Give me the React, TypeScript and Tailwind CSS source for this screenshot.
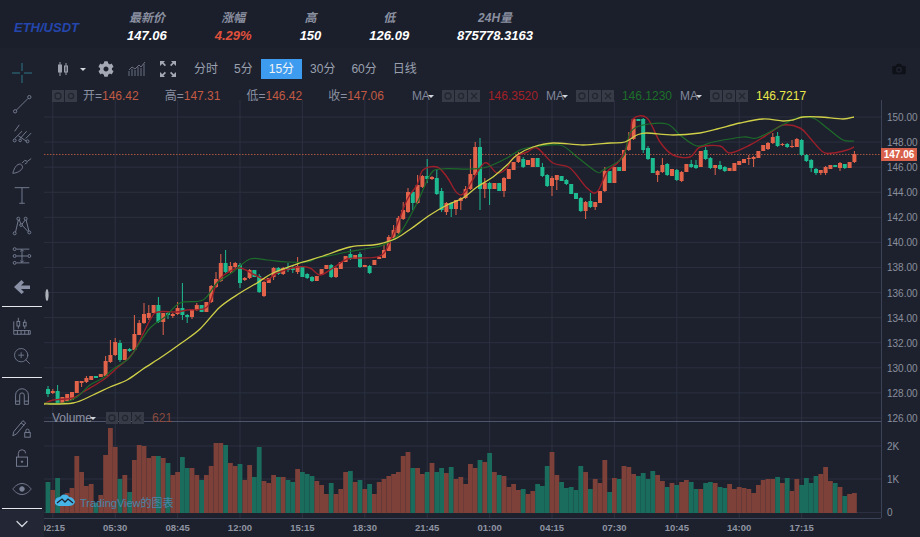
import { ZoomIn, ChevronDown, Camera } from "lucide-react";
import { FaCog } from "react-icons/fa";

type Candle = [number, number, number, number?, number?];
// [up 1 / down 0, body top, body bottom, wick top, wick bottom], page pixels
const CANDLES: Candle[] = [
  [0, 389, 394, 386, 397], [1, 391, 393, 389, 394], [0, 391, 403, 385, 404], [1, 397, 403], [1, 394, 401], [1, 392, 400], [1, 381, 393], [1, 381, 383, 381, 387],
  [1, 378, 382, 376, 383], [1, 376, 380], [0, 376, 378], [1, 374, 377], [1, 361, 376, 356, 376], [1, 355, 362, 340, 363], [1, 342, 355, 338, 356], [0, 343, 360, 340, 362],
  [1, 349, 360], [0, 349, 351, 348, 352], [1, 334, 350, 315, 350], [1, 323, 335, 320, 335], [1, 314, 323, 303, 324], [1, 313, 318, 305, 320], [1, 305, 313], [0, 305, 322, 297, 323],
  [1, 313, 322, 313, 335], [0, 313, 315, 312, 319], [1, 314, 316, 313, 318], [1, 308, 314, 302, 315], [0, 308, 315, 283, 320], [0, 315, 317, 314, 323], [1, 310, 317, 309, 319], [1, 305, 310, 303, 311],
  [0, 305, 312], [1, 302, 312], [1, 286, 302, 285, 303], [1, 279, 287, 272, 288], [1, 263, 281, 254, 282], [0, 263, 272, 250, 273], [1, 266, 272, 262, 273], [1, 263, 267, 262, 268],
  [0, 265, 283, 263, 288], [1, 278, 280, 277, 281], [1, 270, 278, 269, 279], [0, 270, 277], [0, 276, 292, 274, 293], [1, 282, 296, 281, 297], [1, 278, 283], [1, 268, 277, 267, 280],
  [0, 268, 274, 267, 275], [1, 268, 274, 267, 275], [0, 268, 270, 263, 272], [0, 268, 270, 266, 273], [1, 266, 272, 257, 274], [0, 267, 277], [0, 274, 278, 273, 279], [0, 277, 281, 276, 282],
  [1, 276, 281], [1, 269, 275], [1, 265, 269], [0, 265, 277, 264, 278], [1, 268, 277, 267, 278], [1, 262, 269], [1, 256, 262], [0, 254, 259, 249, 260],
  [1, 255, 259], [0, 254, 267, 252, 268], [1, 265, 267], [0, 266, 273, 265, 274], [1, 260, 265], [1, 257, 259], [1, 250, 258, 245, 258], [1, 237, 251, 235, 251],
  [1, 230, 238, 225, 239], [1, 218, 233, 216, 234], [1, 210, 219, 202, 220], [1, 192, 212, 188, 213], [0, 192, 203, 191, 210], [1, 185, 203, 175, 204], [1, 176, 187, 175, 188], [0, 176, 179, 159, 183],
  [1, 177, 179, 176, 180], [0, 178, 194, 169, 195], [0, 191, 210, 188, 212], [1, 203, 212, 202, 215], [0, 203, 209, 202, 217], [1, 200, 209, 200, 215], [1, 198, 201, 197, 210], [1, 189, 198, 186, 199],
  [1, 174, 189, 159, 190], [1, 147, 175, 142, 176], [0, 147, 189, 138, 210], [1, 183, 189, 178, 198], [0, 183, 189, 182, 205], [1, 183, 189], [0, 183, 191], [1, 178, 191, 177, 197],
  [1, 169, 179], [1, 162, 170], [1, 156, 162, 152, 163], [0, 159, 167, 157, 168], [1, 160, 165], [1, 158, 167], [0, 158, 167], [0, 167, 176, 163, 177],
  [0, 175, 186, 174, 187], [1, 178, 186, 176, 196], [1, 175, 180, 175, 190], [0, 176, 181], [0, 180, 184, 179, 185], [0, 184, 194], [0, 193, 199], [0, 198, 211, 197, 212],
  [1, 202, 211, 201, 219], [0, 201, 207, 193, 208], [1, 202, 207, 202, 210], [1, 191, 203], [1, 171, 191, 167, 192], [0, 171, 183], [1, 167, 183], [0, 167, 171],
  [1, 150, 171], [1, 140, 150, 132, 151], [1, 119, 139, 118, 140], [0, 119, 121], [0, 119, 150, 118, 153], [0, 148, 159, 146, 160], [0, 158, 173], [1, 171, 175, 170, 182],
  [1, 165, 172, 158, 173], [0, 164, 175, 163, 176], [1, 169, 176], [0, 170, 180, 169, 181], [1, 172, 181, 171, 182], [1, 164, 172], [0, 164, 167, 160, 168], [0, 165, 168, 160, 169],
  [1, 151, 167], [0, 150, 159, 147, 160], [0, 158, 168, 157, 169], [1, 165, 168, 165, 175], [0, 165, 169, 161, 170], [0, 167, 171, 166, 172], [1, 168, 171], [1, 163, 171],
  [1, 161, 165], [1, 159, 163], [1, 158, 159, 155, 165], [1, 157, 159, 156, 167], [1, 151, 158], [1, 145, 151], [1, 143, 149, 142, 150], [1, 137, 143, 133, 144],
  [0, 136, 146, 132, 147], [1, 144, 145, 143, 146], [0, 144, 147, 143, 148], [1, 146, 147, 140, 148], [1, 139, 147, 138, 147], [0, 140, 155, 139, 156], [0, 155, 161, 154, 162], [0, 160, 168, 159, 172],
  [0, 169, 173, 168, 175], [1, 170, 173, 170, 175], [1, 167, 173, 166, 175], [1, 165, 169], [0, 165, 167], [1, 163, 168, 162, 171], [0, 164, 168, 164, 169], [1, 162, 168], [1, 154, 162, 151, 163],
];

// top of each volume bar, page pixels; negative = falling bar
const VOLUMES = [
  -482, 490, -478, 497, 493, 488, 456, 472, 486, 484, -503, 495, 455, 428, 447, -479, 475, -492, 460, 445, 446, 458, 456, -456, 458, -463, 475, 472, -457, -468, 468, 475, -480, 475, 466, 443, 443, -445, 463, 466, -464, 480, 465, -477, -447, 481, 483, 475, -477,
  477, -480, -482, 469, -472, -474, -476, 481, 485, 494, -483, 494, 489, 472, -471, 482, -480, 489, -484, 494, 482, 479, 476, 474, 472, 456, 452, -468, 468, 474, -472, 463, -472, -468, 473, -467, 479, 477, 484, 464, 468, -460, 462, -453, 472, -475,
  476, 487, 484, 490, -489, 494, 491, -484, -486, -466, 452, 475, -482, -488, -487, -490, -466, 472, -489, 479, 483, 460, -492, 478, -479, 466, 467, 474, -476, -473, -479, -471, 475, 481, -487, 483, -485, 482, 480, -482, -489, 489, -483, -482, 483, -487, -488, 484, 489, 487, 488, 489, 493, 485, 480, 479, 479, -477, 483, -478, 491, 479, -485, -478, -483, -476, 474, 467, 481, -483, 487, -496, 494, 493,
];

const RED: [number, number][] = [[44, 404], [53, 400], [73, 398], [83, 392], [103, 380], [117, 368], [133, 353], [150, 320], [158, 312], [177, 312], [187, 310], [207, 307], [217, 283], [227, 273], [240, 268], [255, 275], [267, 280], [277, 273], [297, 267], [310, 268], [320, 275], [333, 268], [347, 259], [360, 258], [380, 256], [390, 242], [407, 200], [417, 185], [423, 170], [437, 167], [447, 177], [457, 193], [465, 192], [480, 168], [487, 163], [497, 173], [507, 168], [513, 158], [527, 152], [537, 148], [553, 163], [570, 168], [587, 188], [597, 192], [607, 172], [620, 160], [630, 137], [633, 119], [647, 118], [660, 142], [673, 155], [690, 157], [700, 147], [720, 146], [730, 153], [750, 145], [770, 133], [783, 125], [800, 128], [810, 138], [823, 152], [833, 153], [847, 150], [854, 147]];
const GREEN: [number, number][] = [[44, 403], [63, 403], [77, 397], [90, 385], [103, 378], [112, 370], [127, 360], [133, 353], [150, 328], [165, 317], [180, 303], [203, 300], [217, 283], [233, 272], [250, 259], [267, 260], [287, 262], [307, 262], [317, 258], [333, 255], [347, 252], [370, 248], [383, 245], [400, 233], [417, 203], [430, 175], [440, 169], [470, 169], [487, 167], [507, 158], [520, 150], [533, 147], [560, 145], [577, 157], [597, 172], [603, 170], [623, 157], [630, 133], [643, 125], [667, 124], [680, 135], [697, 146], [713, 142], [743, 137], [757, 138], [777, 128], [797, 118], [813, 118], [827, 128], [843, 140], [854, 141]];
const YELLOW: [number, number][] = [[44, 404], [73, 403], [93, 395], [110, 387], [127, 380], [143, 369], [163, 356], [180, 344], [200, 329], [220, 307], [240, 293], [257, 283], [273, 273], [300, 263], [323, 256], [350, 247], [373, 245], [383, 243], [397, 238], [412, 228], [430, 215], [447, 205], [463, 198], [477, 187], [493, 177], [507, 165], [517, 155], [533, 147], [553, 143], [583, 145], [610, 143], [625, 142], [637, 135], [647, 133], [673, 135], [700, 133], [717, 129], [740, 123], [763, 119], [783, 121], [793, 120], [803, 117], [820, 117], [843, 119], [854, 117]];

const smooth = (p: [number, number][]) => {
  let d = `M${p[0][0]} ${p[0][1]}`;
  for (let i = 0; i < p.length - 1; i++) {
    const a = p[Math.max(i - 1, 0)], b = p[i], c = p[i + 1], e = p[Math.min(i + 2, p.length - 1)];
    d += `C${b[0] + (c[0] - a[0]) / 6} ${b[1] + (c[1] - a[1]) / 6} ${c[0] - (e[0] - b[0]) / 6} ${c[1] - (e[1] - b[1]) / 6} ${c[0]} ${c[1]}`;
  }
  return d;
};

const barX = (i: number) => 52.8 + 4.8 * i;
const PRICES = [150, 148, 146, 144, 142, 140, 138, 136, 134, 132, 130, 128, 126];
const TIMES = ["02:15", "05:30", "08:45", "12:00", "15:15", "18:30", "21:45", "01:00", "04:15", "07:30", "10:45", "14:00", "17:15"];
const priceY = (i: number) => 117 + i * 25.08;

function Chart() {
  return (
    <svg viewBox="44 84 876 453" className="block w-full h-full">
      <g stroke="#2c3040" strokeWidth="1">
        {TIMES.map((_, i) => <line key={i} x1={52.8 + i * 62.4} x2={52.8 + i * 62.4} y1="100" y2="518" />)}
        {PRICES.map((_, i) => <line key={i} x1="44" x2="881" y1={priceY(i)} y2={priceY(i)} />)}
        <line x1="44" x2="881" y1="446" y2="446" />
        <line x1="44" x2="881" y1="479" y2="479" />
        <line x1="44" x2="881" y1="512.5" y2="512.5" />
      </g>
      {VOLUMES.map((t, i) => {
        const top = Math.abs(t);
        return <rect key={i} x={barX(i - 1) - 2.4} y={top} width="4.8" height={513 - top} fill={t < 0 ? "#1a6c5d" : "#7d413a"} />;
      })}
      <line x1="44" x2="881" y1="154.5" y2="154.5" stroke="#a8543f" strokeDasharray="1.5 1.5" />
      {CANDLES.map(([up, top, bottom, hi, lo], i) => {
        const x = barX(i - 1);
        const c = up ? "#e2634a" : "#1fbb90";
        return (
          <g key={i} fill={c}>
            <rect x={x - 0.5} y={hi ?? top} width="1" height={(lo ?? bottom) - (hi ?? top)} />
            <rect x={x - 2} y={top} width="4" height={bottom - top} />
          </g>
        );
      })}
      <path d={smooth(RED)} fill="none" stroke="#9c1f2a" strokeWidth="1.4" />
      <path d={smooth(GREEN)} fill="none" stroke="#1d6b2a" strokeWidth="1.2" />
      <path d={smooth(YELLOW)} fill="none" stroke="#cfcf48" strokeWidth="1.3" />
      <line x1="44" x2="881" y1="421.5" y2="421.5" stroke="#4f566b" />
      <line x1="44" x2="881" y1="518.5" y2="518.5" stroke="#3d4356" />
      <line x1="881.5" x2="881.5" y1="100" y2="518" stroke="#3d4356" />
      <g fill="#8a8f9e" fontSize="10">
        {PRICES.map((p, i) => <text key={p} x="887" y={priceY(i) + 4}>{p}.00</text>)}
        <text x="887" y="450">2K</text>
        <text x="887" y="483">1K</text>
        <text x="887" y="516">0</text>
      </g>
      <g fill="#8f94a2" fontSize="9.5" fontWeight="700" textAnchor="middle">
        {TIMES.map((t, i) => <text key={t} x={52.8 + i * 62.4} y="531">{t}</text>)}
      </g>
      <rect x="881" y="148" width="36" height="13" fill="#d9604a" />
      <text x="899" y="158" fill="#ffffff" fontSize="10" fontWeight="700" textAnchor="middle">147.06</text>
      <ellipse cx="47" cy="295" rx="1.6" ry="6" fill="#aeb2bb" />
      <path d="M55 501c1-5 5-3 6-5 2-2 6-2 8 1 2 0 5 1 6 5-1 3-4 4-6 4H60c-3 0-6-2-5-5z" fill="#46b4e6" />
      <path d="M57 503l5-4 3 3 3-3 5 4" fill="none" stroke="#1c2130" strokeWidth="1.3" />
    </svg>
  );
}

function Box({ kind }: { kind: "eye" | "cog" | "x" }) {
  return (
    <span className="flex w-3 h-3 items-center justify-center bg-[#373b47]">
      <svg viewBox="0 0 12 12" className="w-3 h-3" fill="none" stroke="#22262f" strokeWidth="1.3">
        {kind === "x" ? <path d="M3 3l6 6M9 3l-6 6" /> : <circle cx="6" cy="6" r={kind === "cog" ? 2.6 : 3} />}
      </svg>
    </span>
  );
}

function Boxes({ n }: { n: number }) {
  const kinds: ("eye" | "cog" | "x")[] = n === 3 ? ["eye", "cog", "x"] : ["eye", "cog"];
  return <span className="flex gap-px">{kinds.map((k) => <Box key={k} kind={k} />)}</span>;
}

function Caret() {
  return <span className="-ml-0.5 w-0 h-0 border-x-[3px] border-t-[3px] border-x-transparent border-t-gray-300" />;
}

function Ma({ value, color }: { value: string; color: string }) {
  return (
    <span className="flex items-center">
      <span className="flex items-center text-[#80869a]">MA<Caret /></span>
      <span className="ml-2"><Boxes n={3} /></span>
      <span className={`ml-2 ${color}`}>{value}</span>
    </span>
  );
}

function Tool({ children }: { children: React.ReactNode }) {
  return (
    <button className="flex-1 flex items-center justify-center text-[#7a8196]">
      <svg viewBox="0 0 24 24" className="w-5.5 h-5.5" fill="none" stroke="currentColor" strokeWidth="1">{children}</svg>
    </button>
  );
}

function Rule() {
  return <div className="h-px mx-0.5 bg-gray-200 shrink-0" />;
}

function Sidebar() {
  return (
    <aside className="w-11 shrink-0 flex flex-col pt-2.5">
      <div className="h-61 flex flex-col">
        <button className="flex-1 flex items-center justify-center">
          <svg viewBox="0 0 24 24" className="w-6 h-6" fill="none" stroke="#2f7485" strokeWidth="1"><path d="M12 2v8M12 14v8M2 12h8M14 12h8" /></svg>
        </button>
        <Tool><circle cx="4.500" cy="20" r="1.800" /><circle cx="20" cy="4.500" r="1.800" /><path d="M6 18.500L18.500 6" /></Tool>
        <Tool><path d="M9 2L4 9M17 9l-7 8M22 11l-6 6M4 17l8-8M8 14l9 6" /><circle cx="4" cy="19" r="1.600" /><circle cx="18" cy="20" r="1.600" /><circle cx="10" cy="19" r="1.400" /></Tool>
        <Tool><path d="M2 21c1-4 3-9 7-10 2-.5 4 2 3.500 4-1 3-6 6-10.500 6z" /><path d="M12 10l3-3 3 1M15 11l3-2M18 8l4-3" /></Tool>
        <Tool><path d="M4 4h16M12 4v17M9 21h6" /></Tool>
        <Tool><circle cx="8" cy="4" r="1.600" /><circle cx="16" cy="4" r="1.600" /><circle cx="4" cy="20" r="1.600" /><circle cx="20" cy="19" r="1.600" /><circle cx="11" cy="11" r="1.500" /><path d="M5 18.500L8 5.500M9 5l1.500 4.500M15.500 5.500L12 10M16.500 5.500L19.500 17.500M12.500 11.500l6 6.500" /></Tool>
        <Tool><circle cx="4" cy="4.500" r="1.600" /><circle cx="4" cy="12" r="1.600" /><circle cx="20" cy="12" r="1.600" /><circle cx="4" cy="19.500" r="1.600" /><path d="M6 4.500h14M6 12h12M6 19.500h14M12 5v14M10 7l2-2 2 2M10 17l2 2 2-2" /></Tool>
        <button className="flex-1 flex items-center justify-center">
          <svg viewBox="0 0 24 24" className="w-6 h-6" fill="#8a91a6"><path d="M11.500 5l2.500 2.500-3 3h9v3.500h-9l3 3L11.500 19 4 12z" /></svg>
        </button>
      </div>
      <div className="mt-1 mb-1"><Rule /></div>
      <div className="h-15 flex flex-col">
        <Tool><path d="M3 21h18v-4H3zM3 17V7M7 17v4M11 17v4M15 17v4M19 17v4" /><rect x="6.500" y="7" width="3" height="5" /><rect x="13.500" y="8" width="3" height="4" /><path d="M8 3v4M8 12v3M15 5v3M15 12v3" /></Tool>
        <button className="flex-1 flex items-center justify-center text-[#7a8196]"><ZoomIn size={20} strokeWidth={1} /></button>
      </div>
      <div className="mt-1.5 mb-1"><Rule /></div>
      <div className="h-30.5 flex flex-col">
        <Tool><path d="M5 20V10a7 7 0 0 1 14 0v10h-4.500V10a2.500 2.500 0 0 0-5 0v10zM5 16.500h4.500M14.500 16.500H19" /></Tool>
        <Tool><path d="M3 16L13 4l3 2.500L6 18.500l-4 2zM11 6.500l3.500 2.500" /><rect x="15" y="17" width="6" height="5" /><path d="M16.200 17v-2a1.800 1.800 0 0 1 3.600 0v2" /></Tool>
        <Tool><rect x="6" y="11" width="12" height="10" /><path d="M8 11V7a4 4 0 0 1 8 0" /><circle cx="12" cy="16" r=".8" fill="currentColor" /></Tool>
        <Tool><path d="M2 12s4-6 10-6 10 6 10 6-4 6-10 6-10-6-10-6z" /><circle cx="12" cy="12" r="2.500" fill="currentColor" /></Tool>
      </div>
      <div className="mt-1 mb-px"><Rule /></div>
      <div className="flex-1 flex items-center justify-center bg-[#232735] text-gray-300"><ChevronDown size={20} strokeWidth={1.5} /></div>
    </aside>
  );
}

function Toolbar() {
  const items = ["分时", "5分", "15分", "30分", "60分", "日线"];
  return (
    <div className="h-9 shrink-0 flex items-center pt-1.5 pl-3 text-xs text-[#9aa0b0]">
      <svg viewBox="0 0 14 16" className="w-3.5 h-4" fill="none" stroke="#9ba0ac">
        <path d="M4 1v14M10 2v12" /><rect x="2.500" y="4" width="3" height="7" fill="#9ba0ac" /><rect x="8.500" y="5" width="3" height="6" />
      </svg>
      <span className="ml-2.5 w-0 h-0 border-x-[3px] border-t-[3px] border-x-transparent border-t-gray-300" />
      <FaCog className="ml-3 w-4 h-4 text-[#a3a8b4]" />
      <svg viewBox="0 0 18 16" className="ml-3.5 w-4.5 h-4" fill="none" stroke="#6a7080" strokeWidth="1">
        <path d="M1 15v-5M4 15V8M7 15V9M10 15V6M13 15V7M16 15V3M1 9l3-3 3 2 4-4 2 2 4-5" />
      </svg>
      <svg viewBox="0 0 16 16" className="ml-3.5 w-4 h-4" fill="#a3a8b4">
        <path d="M0 0h5L3.500 1.500 6 4 4.800 5.200 2.300 2.700 0 5zM16 0v5l-2.300-2.300L11.200 5.200 10 4l2.500-2.500L11 0zM0 16v-5l2.300 2.300L4.800 10.800 6 12l-2.500 2.500L5 16zM16 16h-5l1.500-1.500L10 12l1.200-1.200 2.500 2.500L16 11z" />
      </svg>
      <div className="ml-2.5 flex">
        {items.map((t) => (
          <button key={t} className={t === "15分" ? "h-5 px-2 bg-[#3d9cf0] text-gray-100" : "h-5 px-2"}>{t}</button>
        ))}
      </div>
      <Camera className="ml-auto mr-3 text-[#0e1118]" size={18} fill="#0e1118" stroke="#1e222e" />
    </div>
  );
}

function Stat({ label, value, color }: { label: string; value: string; color: string }) {
  return (
    <div className="flex flex-col items-center italic font-bold">
      <span className="text-xs text-[#8a8fa0]">{label}</span>
      <span className={`text-[13px] ${color}`}>{value}</span>
    </div>
  );
}

export default function App() {
  return (
    <div className="h-screen w-screen overflow-hidden flex flex-col bg-[#1d212d] font-['Liberation_Sans','Noto_Sans_CJK_SC',sans-serif]">
      <header className="h-12 shrink-0 flex items-center gap-12 pt-2 pl-3.5 bg-[#1b1f2b]">
        <span className="text-[13px] font-bold italic text-[#2446ad]">ETH/USDT</span>
        <Stat label="最新价" value="147.06" color="text-white" />
        <Stat label="涨幅" value="4.29%" color="text-[#e0513c]" />
        <Stat label="高" value="150" color="text-white" />
        <Stat label="低" value="126.09" color="text-white" />
        <Stat label="24H量" value="875778.3163" color="text-white" />
      </header>
      <div className="flex-1 min-h-0 flex">
        <Sidebar />
        <main className="flex-1 min-w-0 flex flex-col">
          <Toolbar />
          <div className="relative flex-1 min-h-0">
            <Chart />
            <div className="absolute top-1 left-2 flex items-center gap-6.5 text-xs text-[#8a90a2]">
              <span className="flex items-center gap-1.5"><Boxes n={2} /><span>开=<span className="text-[#c25a44]">146.42</span></span></span>
              <span>高=<span className="text-[#c25a44]">147.31</span></span>
              <span>低=<span className="text-[#c25a44]">146.42</span></span>
              <span>收=<span className="text-[#c25a44]">147.06</span></span>
              <span className="ml-0.5 flex items-center gap-2">
                <Ma value="146.3520" color="text-[#a32027]" />
                <Ma value="146.1230" color="text-[#1c6f2a]" />
                <Ma value="146.7217" color="text-[#e8e84a]" />
              </span>
            </div>
            <div className="absolute top-81.5 left-2 flex items-center text-xs text-[#8a90a2]">
              <span className="flex items-center">Volume<Caret /></span>
              <span className="ml-2.5"><Boxes n={3} /></span>
              <span className="ml-2 text-[#8a4a3e]">621</span>
            </div>
            <span className="absolute bottom-6.5 left-9 text-[11px] text-[#4a86a8]">TradingView的图表</span>
          </div>
        </main>
      </div>
    </div>
  );
}
